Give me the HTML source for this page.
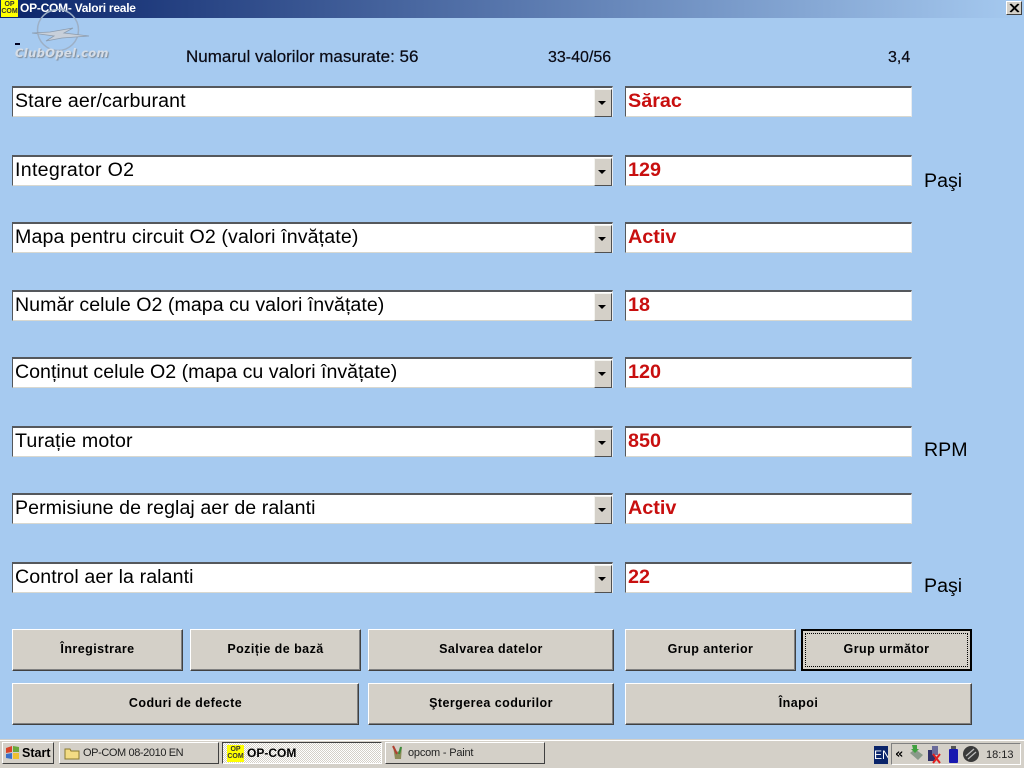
<!DOCTYPE html>
<html><head><meta charset="utf-8"><title>OP-COM</title>
<style>
html,body{margin:0;padding:0}
body{width:1024px;height:768px;position:relative;overflow:hidden;background:#a6caf0;font-family:"Liberation Sans",sans-serif;color:#000}
div,span{position:absolute;box-sizing:border-box;white-space:nowrap}
.title{left:0;top:0;width:1024px;height:18px;background:linear-gradient(90deg,#0a246a,#a6caf0)}
.ico{background:#ff0;color:#333;font:bold 7px/7px "Liberation Sans",sans-serif;text-align:center;width:17px;height:17px;padding-top:1px}
.ttl{left:20px;top:1px;color:#fff;font:bold 12px/15px "Liberation Sans",sans-serif;letter-spacing:-.25px}
.x{left:1006px;top:1px;width:16px;height:14px;background:#d4d0c8;border:1px solid;border-color:#fff #404040 #404040 #fff}
.lbl{line-height:18px;color:#0a0a14}
.c{left:12px;width:601px;height:31px;background:#fff;border:1px solid;border-top:2px solid #55585c;border-color:#55585c #e8ecf0 #d8d8d0 #55585c;font-size:19.6px;line-height:27px;padding-left:2px}
.c b{position:absolute;right:0;top:1px;width:16px;height:26px;background:#d4d0c8;border:1px solid;border-color:#f4f4f0 #505050 #505050 #f4f4f0}
.c b:after{content:"";position:absolute;left:3px;top:11px;border:4px solid transparent;border-top:4px solid #000;border-bottom:0}
.v{left:625px;width:287px;height:31px;background:#fff;border:1px solid;border-top:2px solid #55585c;border-color:#55585c #e8ecf0 #d8d8d0 #55585c;font:bold 19.8px/27px "Liberation Sans",sans-serif;color:#c80f0f;padding-left:2px}
.u{left:924px;font-size:19.6px;line-height:24px}
.b{height:42px;background:#d4d0c8;border:1px solid;border-color:#fff #404040 #404040 #fff;box-shadow:inset -1px -1px 0 #808080;font:bold 12.5px/39px "Liberation Sans",sans-serif;letter-spacing:.45px;text-align:center}
.task{left:0;top:739px;width:1024px;height:29px;background:#d4d0c8;border-top:1px solid #d4d0c8;box-shadow:inset 0 1px 0 #fff}
.tb{top:742px;height:22px;background:#d4d0c8;border:1px solid;border-color:#fff #404040 #404040 #fff;font-size:11px;line-height:21px}
</style></head><body>
<div class="title"></div>
<div class="ico" style="left:1px;top:0">OP<br>COM</div>
<div class="ttl">OP-COM- Valori reale</div>
<svg width="110" height="50" style="position:absolute;left:0;top:8px">
<circle cx="58" cy="22" r="20.5" fill="none" stroke="#9db0c6" stroke-width="1.5"/>
<path d="M32 25L50 24 73 20 64 25 89 28 62 30 46 33 54 28z" fill="#c8d0da" stroke="#8c9cae" stroke-width=".8"/>
</svg>
<div class="x"><svg width="14" height="12" style="position:absolute;left:0;top:0"><path d="M3 2l8 8M4 2l8 8M11 2l-8 8M12 2l-8 8" stroke="#000" stroke-width="1.2"/></svg></div>

<div style="left:15px;top:43px;width:5px;height:2px;background:#000020"></div>
<div style="left:15px;top:45px;font:italic bold 11.5px/16px 'DejaVu Sans',sans-serif;color:#d6dde6;letter-spacing:.35px;text-shadow:1px 1px 1px #7f8a96">ClubOpel.com</div>

<div class="lbl" style="left:186px;top:48px;font-size:17px;-webkit-text-stroke:.2px #0a0a14">Numarul valorilor masurate: 56</div>
<div class="lbl" style="left:548px;top:49px;font-size:16px;-webkit-text-stroke:.2px #0a0a14">33-40/56</div>
<div class="lbl" style="left:888px;top:49px;font-size:16px;-webkit-text-stroke:.2px #0a0a14">3,4</div>

<div class="c" style="top:86px;letter-spacing:.1px">Stare aer/carburant<b></b></div><div class="v" style="top:86px">Sărac</div>
<div class="c" style="top:155px;letter-spacing:.3px">Integrator O2<b></b></div><div class="v" style="top:155px">129</div><div class="u" style="top:169px">Paşi</div>
<div class="c" style="top:222px;letter-spacing:.12px">Mapa pentru circuit O2 (valori învățate)<b></b></div><div class="v" style="top:222px">Activ</div>
<div class="c" style="top:290px;letter-spacing:.03px">Număr celule O2 (mapa cu valori învățate)<b></b></div><div class="v" style="top:290px">18</div>
<div class="c" style="top:357px">Conținut celule O2 (mapa cu valori învățate)<b></b></div><div class="v" style="top:357px">120</div>
<div class="c" style="top:426px;letter-spacing:.15px">Turație motor<b></b></div><div class="v" style="top:426px">850</div><div class="u" style="top:438px">RPM</div>
<div class="c" style="top:493px;letter-spacing:.06px">Permisiune de reglaj aer de ralanti<b></b></div><div class="v" style="top:493px">Activ</div>
<div class="c" style="top:562px;letter-spacing:.1px">Control aer la ralanti<b></b></div><div class="v" style="top:562px">22</div><div class="u" style="top:574px">Paşi</div>

<div class="b" style="left:12px;top:629px;width:171px">Înregistrare</div>
<div class="b" style="left:190px;top:629px;width:171px">Poziție de bază</div>
<div class="b" style="left:368px;top:629px;width:246px">Salvarea datelor</div>
<div class="b" style="left:625px;top:629px;width:171px">Grup anterior</div>
<div class="b" style="left:801px;top:629px;width:171px;border:2px solid #000;box-shadow:none;line-height:37px">Grup următor<div style="left:2px;top:2px;right:2px;bottom:2px;border:1px dotted #000"></div></div>
<div class="b" style="left:12px;top:683px;width:347px">Coduri de defecte</div>
<div class="b" style="left:368px;top:683px;width:246px">Ştergerea codurilor</div>
<div class="b" style="left:625px;top:683px;width:347px">Înapoi</div>

<div class="task"></div>
<div class="tb" style="left:2px;width:52px;font:bold 12.5px/21px 'Liberation Sans',sans-serif;padding-left:19px">Start
<svg width="15" height="15" style="position:absolute;left:2px;top:2px"><path d="M1 3l6-2v6l-6 1z" fill="#d8442a"/><path d="M8 1l6 1v5l-6 0z" fill="#6aa83a"/><path d="M1 9l6-1v6l-6-1z" fill="#3a70c8"/><path d="M8 8h6v6l-6 0z" fill="#eec030"/></svg></div>
<div class="tb" style="left:59px;width:160px;padding-left:23px;color:#222;letter-spacing:-.4px">OP-COM 08-2010 EN
<svg width="17" height="14" style="position:absolute;left:4px;top:3px"><path d="M1 3h5l1 2h8v8H1z" fill="#f3dc84" stroke="#8a7a30"/></svg></div>
<div class="tb" style="left:222px;width:160px;border-color:#404040 #fff #fff #404040;background:repeating-conic-gradient(#fff 0 25%,#d4d0c8 0 50%) 0 0/2px 2px;font:bold 12px/21px 'Liberation Sans',sans-serif;padding-left:24px">OP-COM
<div class="ico" style="left:4px;top:2px;letter-spacing:0;font:bold 7px/7px 'Liberation Sans',sans-serif">OP<br>COM</div></div>
<div class="tb" style="left:385px;width:160px;padding-left:22px;color:#222;letter-spacing:-.2px">opcom - Paint
<svg width="16" height="16" style="position:absolute;left:4px;top:2px"><path d="M3 1l3 6 4-1 2-5-1 13H5z" fill="#8c8c58"/><path d="M3 1l4 8" stroke="#b04030" stroke-width="2"/><path d="M11 2l-2 7" stroke="#3a8a3a" stroke-width="2"/></svg></div>

<div style="left:874px;top:746px;width:14px;height:18px;background:#0a246a;color:#fff;font-size:12px;line-height:18px;overflow:hidden">EN</div>
<div style="left:891px;top:743px;width:130px;height:22px;border:1px solid;border-color:#808080 #fff #fff #808080"></div>
<div style="left:895px;top:747px;font:bold 13px/16px 'DejaVu Sans',sans-serif">«</div>
<svg width="84" height="20" style="position:absolute;left:908px;top:744px">
<path d="M2 9l5-4 8 6-5 5z" fill="#8a9a8a"/><path d="M4 1l5 0 0 4 2 0-4 4-4-4 2 0z" fill="#3fa03f"/>
<rect x="20" y="6" width="7" height="11" fill="#30306a"/><rect x="24" y="2" width="6" height="9" fill="#6a6a9a"/><path d="M25 10l7 9M32 10l-7 9" stroke="#e02020" stroke-width="2"/>
<rect x="41" y="5" width="9" height="14" rx="1" fill="#1818b0"/><rect x="43" y="2" width="5" height="3" fill="#555"/>
<circle cx="63" cy="10" r="8" fill="#3a3a3a"/><path d="M58 12l8-7M60 15l8-7" stroke="#bbb" stroke-width="1.2"/>
</svg>
<div style="left:986px;top:746px;font-size:11px;line-height:18px;color:#222">18:13</div>
</body></html>
